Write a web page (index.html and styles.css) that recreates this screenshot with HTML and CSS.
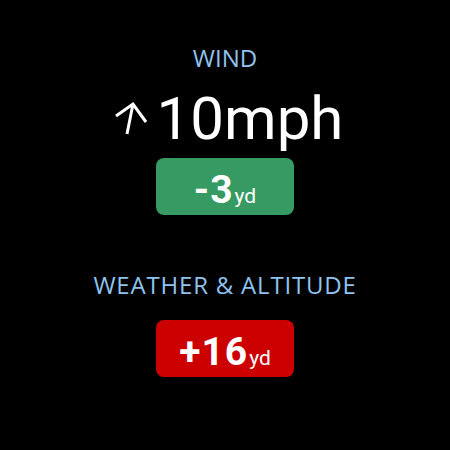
FILE: index.html
```html
<!DOCTYPE html>
<html lang="en">
<head>
<meta charset="utf-8">
<title>Wind adjustment</title>
<link rel="stylesheet" href="styles.css">
</head>
<body>
<div class="screen">

	<div class="label label-wind">WIND</div>

	<div class="windrow">
		<svg class="windarrow" width="36" height="36" viewBox="0 0 36 36">
			<path d="M20 3 L14 33 M3 15 L20 3 L33 21" fill="none" stroke="#fff" stroke-width="3"/>
		</svg>
		<span class="windspeed">10mph</span>
	</div>

	<div class="badge badge-good">
		<span class="badgevalue">-3</span><span class="badgeunit">yd</span>
	</div>

	<div class="label label-weather">WEATHER &amp; ALTITUDE</div>

	<div class="badge badge-bad">
		<span class="badgevalue">+16</span><span class="badgeunit">yd</span>
	</div>

</div>
</body>
</html>
```

FILE: styles.css
```css
html, body {
	margin: 0;
	padding: 0;
	background: #000;
}
.screen {
	width: 450px;
	height: 450px;
	display: flex;
	flex-direction: column;
	align-items: center;
	padding-top: 46px;
	box-sizing: border-box;
	font-family: Roboto, "Liberation Sans", sans-serif;
	color: #fff;
}
.label {
	font-family: "Open Sans", "Noto Sans", sans-serif;
	font-size: 24px;
	line-height: 24px;
	color: #8fc3ef;
}
.windrow {
	display: flex;
	align-items: center;
	gap: 8px;
	margin-top: 19px;
	margin-left: 6px;
}
.windarrow {
	display: block;
}
.windspeed {
	font-size: 60px;
	line-height: 60px;
}
.badge {
	width: 138px;
	height: 57px;
	box-sizing: border-box;
	padding-top: 13px;
	border-radius: 8px;
	display: flex;
	justify-content: center;
	align-items: baseline;
	margin-top: 9px;
}
.badge-good {
	background: #379a62;
}
.badge-bad {
	background: #cc0000;
	margin-top: 23px;
}
.label-weather {
	margin-top: 58px;
	letter-spacing: 0.8px;
}
.badgevalue {
	font-size: 39px;
	line-height: 39px;
	font-weight: bold;
	letter-spacing: 1px;
}
.badgeunit {
	font-size: 21px;
	line-height: 21px;
	margin-left: 1px;
}
```
